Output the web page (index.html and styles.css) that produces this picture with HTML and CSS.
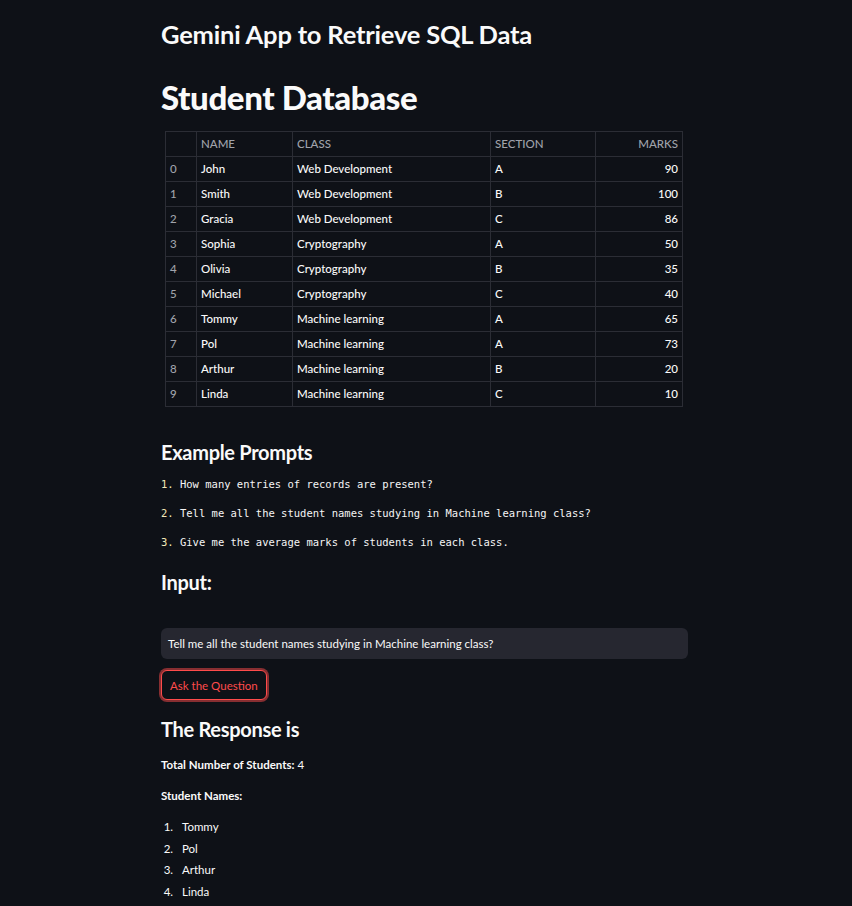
FILE: index.html
```html
<!DOCTYPE html>
<html>
<head>
<meta charset="utf-8">
<link rel="stylesheet" href="styles.css">
</head>
<body>
<main class="main">
  <h2 class="app-title">Gemini App to Retrieve SQL Data</h2>
  <h1 class="db-title">Student Database</h1>
  <div class="table-wrap">
    <table class="df">
      <thead>
        <tr><th class="idx"></th><th class="c-name">NAME</th><th class="c-class">CLASS</th><th class="c-sec">SECTION</th><th class="c-marks num">MARKS</th></tr>
      </thead>
      <tbody>
        <tr><td class="idx">0</td><td>John</td><td>Web Development</td><td>A</td><td class="num">90</td></tr>
        <tr><td class="idx">1</td><td>Smith</td><td>Web Development</td><td>B</td><td class="num">100</td></tr>
        <tr><td class="idx">2</td><td>Gracia</td><td>Web Development</td><td>C</td><td class="num">86</td></tr>
        <tr><td class="idx">3</td><td>Sophia</td><td>Cryptography</td><td>A</td><td class="num">50</td></tr>
        <tr><td class="idx">4</td><td>Olivia</td><td>Cryptography</td><td>B</td><td class="num">35</td></tr>
        <tr><td class="idx">5</td><td>Michael</td><td>Cryptography</td><td>C</td><td class="num">40</td></tr>
        <tr><td class="idx">6</td><td>Tommy</td><td>Machine learning</td><td>A</td><td class="num">65</td></tr>
        <tr><td class="idx">7</td><td>Pol</td><td>Machine learning</td><td>A</td><td class="num">73</td></tr>
        <tr><td class="idx">8</td><td>Arthur</td><td>Machine learning</td><td>B</td><td class="num">20</td></tr>
        <tr><td class="idx">9</td><td>Linda</td><td>Machine learning</td><td>C</td><td class="num">10</td></tr>
      </tbody>
    </table>
  </div>

  <h3 class="sub">Example Prompts</h3>
  <div class="prompts">
    <p class="prompt"><span class="num-mark">1.</span> How many entries of records are present?</p>
    <p class="prompt"><span class="num-mark">2.</span> Tell me all the student names studying in Machine learning class?</p>
    <p class="prompt"><span class="num-mark">3.</span> Give me the average marks of students in each class.</p>
  </div>

  <h3 class="sub input-title">Input:</h3>
  <div class="input-box">Tell me all the student names studying in Machine learning class?</div>
  <button class="ask-btn">Ask the Question</button>

  <h3 class="sub resp-title">The Response is</h3>
  <p class="resp-line"><strong>Total Number of Students:</strong> 4</p>
  <p class="resp-line"><strong>Student Names:</strong></p>
  <ol class="names">
    <li>Tommy</li>
    <li>Pol</li>
    <li>Arthur</li>
    <li>Linda</li>
  </ol>
</main>
</body>
</html>
```

FILE: styles.css
```css
html, body {
  margin: 0;
  padding: 0;
  background: #0e1117;
  color: #fafafa;
  font-family: Lato, "Noto Sans", sans-serif;
}

.main {
  width: 530px;
  margin: 0 auto;
  padding-top: 17px;
  padding-bottom: 20px;
}

.app-title {
  margin: 0;
  font-size: 25.5px;
  font-weight: 700;
  line-height: 34px;
  letter-spacing: -0.2px;
}

.db-title {
  margin: 26px 0 0;
  font-size: 33px;
  font-weight: 900;
  line-height: 40px;
  letter-spacing: -0.4px;
}

.table-wrap {
  margin-top: 14px;
  padding-left: 4px;
}

.df {
  border-collapse: collapse;
  font-size: 11.5px;
  width: 518px;
  table-layout: fixed;
}

.df th, .df td {
  border: 1px solid #2b2d35;
  height: 23px;
  padding: 0 4px 1px;
  text-align: left;
  white-space: nowrap;
}

.df td {
  font-weight: 500;
}

.df th {
  font-weight: 500;
  color: #a0a3ab;
}

.df td.idx {
  color: #a0a3ab;
}

.df .idx { width: 22px; }
.df .c-name { width: 87px; }
.df .c-class { width: 189px; }
.df .c-sec { width: 96px; }
.df .num { text-align: right; }

.sub {
  margin: 0;
  font-size: 20px;
  font-weight: 700;
  line-height: 28px;
  letter-spacing: -0.3px;
}

.table-wrap + .sub {
  margin-top: 31px;
}

.prompts {
  margin-top: 10px;
}

.prompt {
  margin: 0;
  height: 29px;
  line-height: 16px;
  font-family: "DejaVu Sans Mono", "Liberation Mono", monospace;
  font-size: 10.5px;
  color: #f5f5f5;
}

.num-mark {
  color: #f3e9b8;
}

.input-title {
  margin-top: 5px;
}

.input-box {
  margin-top: 32px;
  height: 31px;
  box-sizing: border-box;
  background: #262730;
  border-radius: 6px;
  padding: 0 7px;
  font-size: 11.5px;
  line-height: 31px;
  width: 527px;
}

.ask-btn {
  margin-top: 11px;
  display: block;
  height: 30px;
  padding: 0 8px;
  background: #0e1117;
  color: #ff4b4b;
  border: 1px solid #ff4b4b;
  border-radius: 6px;
  box-shadow: 0 0 0 2px rgba(255, 75, 75, 0.5);
  font-family: Lato, "Noto Sans", sans-serif;
  font-size: 11.5px;
}

.resp-title {
  margin-top: 15px;
}

.resp-line {
  margin: 13px 0 0;
  font-size: 11.5px;
  line-height: 18px;
}

.resp-line + .resp-line {
  margin-top: 13px;
}

.names {
  margin: 11px 0 0;
  padding-left: 15px;
  font-size: 11.5px;
}

.names li {
  line-height: 21.5px;
  padding-left: 6px;
}
```
